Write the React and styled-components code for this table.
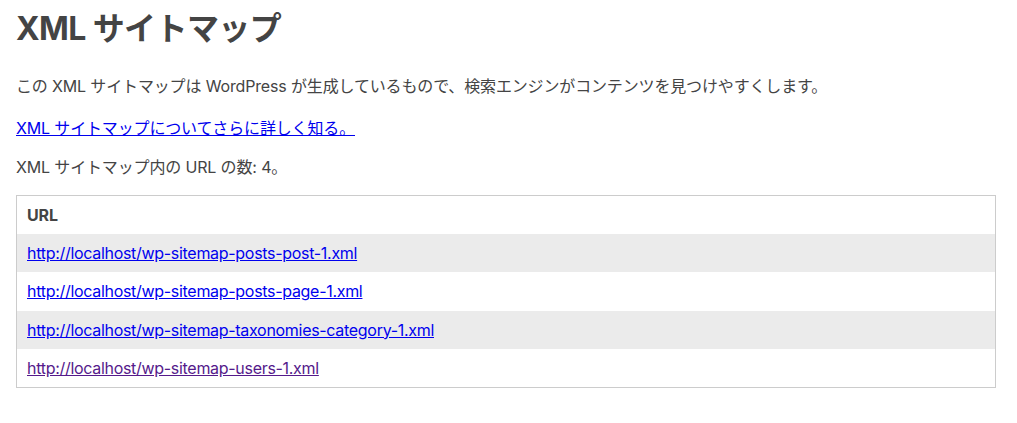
import React from 'react';
import styled, { createGlobalStyle } from 'styled-components';

const urls = [
  { loc: 'http://localhost/wp-sitemap-posts-post-1.xml' },
  { loc: 'http://localhost/wp-sitemap-posts-page-1.xml' },
  { loc: 'http://localhost/wp-sitemap-taxonomies-category-1.xml' },
  { loc: 'http://localhost/wp-sitemap-users-1.xml', visited: true },
];

const GlobalStyle = createGlobalStyle`
  html, body {
    margin: 0;
    background: #ffffff;
  }
  body {
    font-family: Inter, "Noto Sans CJK JP", sans-serif;
    font-size: 16px;
    letter-spacing: -0.15px;
    color: #444;
  }
`;

export default function App() {
  return (
    <>
      <GlobalStyle />
      <Sitemap>
        <Header>
          <Title>XML サイトマップ</Title>
          <Text $gap={29}>この XML サイトマップは WordPress が生成しているもので、検索エンジンがコンテンツを見つけやすくします。</Text>
          <Text $gap={24}>
            <Link href='https://www.sitemaps.org/'>XML サイトマップについてさらに詳しく知る。</Link>
          </Text>
        </Header>
        <Content>
          <Text $gap={21}>XML サイトマップ内の URL の数: {urls.length}。</Text>
          <Table>
            <thead>
              <tr>
                <Th>URL</Th>
              </tr>
            </thead>
            <tbody>
              {urls.map((item, i) => (
                <Row key={item.loc} $odd={i % 2 === 0}>
                  <Cell>
                    <Link href={item.loc} $visited={item.visited}>
                      {item.loc}
                    </Link>
                  </Cell>
                </Row>
              ))}
            </tbody>
          </Table>
        </Content>
      </Sitemap>
    </>
  );
}

const Sitemap = styled.div`
  max-width: 980px;
  margin: 0 16px;
  padding-bottom: 20px;
`;

const Header = styled.div`
  display: flex;
  flex-direction: column;
  padding-top: 10px;
`;

const Content = styled.div`
  display: flex;
  flex-direction: column;
`;

const Title = styled.h1`
  margin: 0;
  font-size: 32px;
  line-height: 38px;
  font-weight: 700;
  letter-spacing: -0.6px;
  color: #444;
`;

const Text = styled.p`
  margin: ${(p) => p.$gap || 28}px 0 0;
  font-size: 16px;
  line-height: 18px;
`;

const Link = styled.a`
  color: ${(p) => (p.$visited ? '#551a8b' : '#0000ee')};
  text-decoration: underline;
  &:hover {
    text-decoration: none;
  }
`;

const Table = styled.table`
  width: 100%;
  margin-top: 19px;
  border: solid 1px #ccc;
  border-collapse: collapse;
`;

const Th = styled.th`
  text-align: left;
  padding: 10px;
  font-weight: 700;
  line-height: 18px;
`;

const Row = styled.tr`
  background-color: ${(p) => (p.$odd ? '#ebebeb' : '#ffffff')};
`;

const Cell = styled.td`
  padding: 10px;
  line-height: 18.3px;
  letter-spacing: -0.3px;
  direction: ltr;
`;
